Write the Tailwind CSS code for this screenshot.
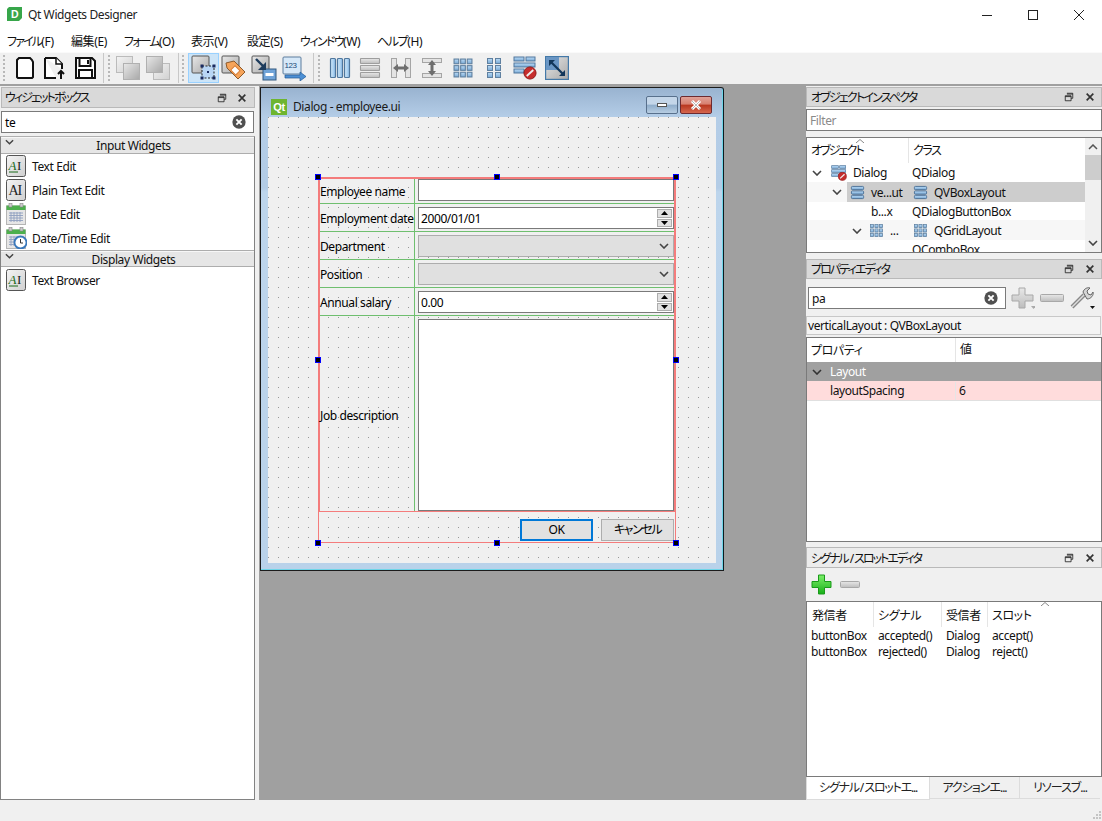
<!doctype html>
<html lang="ja">
<head>
<meta charset="utf-8">
<title>Qt Widgets Designer</title>
<script src="https://cdn.jsdelivr.net/npm/@tailwindcss/browser@4"></script>
</head>
<body class="m-0 overflow-hidden bg-[#f0f0f0]">
<svg class="absolute w-0 h-0">
  <defs>
    <linearGradient id="g" x1="0" y1="0" x2="1" y2="1"><stop offset="0" stop-color="#e8e8e8"/><stop offset="1" stop-color="#a8a8a8"/></linearGradient>
    <linearGradient id="gl" x1="0" y1="0" x2="1" y2="1"><stop offset="0" stop-color="#f4f4f4"/><stop offset="1" stop-color="#d0d0d0"/></linearGradient>
    <linearGradient id="b" x1="0" y1="0" x2="1" y2="0"><stop offset="0" stop-color="#d4ebfb"/><stop offset="1" stop-color="#8cbde8"/></linearGradient>
    <linearGradient id="bv" x1="0" y1="0" x2="0" y2="1"><stop offset="0" stop-color="#bcdcf6"/><stop offset="1" stop-color="#78a8d4"/></linearGradient>
    <linearGradient id="gv" x1="0" y1="0" x2="0" y2="1"><stop offset="0" stop-color="#e8e8e8"/><stop offset="1" stop-color="#bdbdbd"/></linearGradient>
    <linearGradient id="grn" x1="0" y1="0" x2="0" y2="1"><stop offset="0" stop-color="#7df06a"/><stop offset="1" stop-color="#18b018"/></linearGradient>
    <symbol id="fl" viewBox="0 0 12 12"><path d="M3.5 1.5h7v6h-2M1.5 4.5h7v6h-7zM1.5 5.5h7M3.5 2.5h7" fill="none" stroke="#222" stroke-width="1"/></symbol>
    <symbol id="xx" viewBox="0 0 12 12"><path d="M2 2l8 8M10 2l-8 8" stroke="#333" stroke-width="2"/></symbol>
    <symbol id="clr" viewBox="0 0 16 16"><circle cx="8" cy="8" r="7.6" fill="#505050"/><path d="M5 5l6 6M11 5l-6 6" stroke="#fff" stroke-width="2.2"/></symbol>
    <symbol id="chev" viewBox="0 0 10 6"><path d="M1 1l4 4 4-4" fill="none" stroke="#444" stroke-width="1.6"/></symbol>
    <symbol id="vbox" viewBox="0 0 16 16"><g fill="url(#bv)" stroke="#4a6f95"><rect x="1.5" y="1.5" width="13" height="3.5" rx="1"/><rect x="1.5" y="6.3" width="13" height="3.5" rx="1"/><rect x="1.5" y="11" width="13" height="3.5" rx="1"/></g></symbol>
    <symbol id="grid" viewBox="0 0 16 16"><g fill="url(#bv)" stroke="#5f80a0" stroke-width=".8"><rect x="1.5" y="1.5" width="3.4" height="3.4"/><rect x="6.3" y="1.5" width="3.4" height="3.4"/><rect x="11.1" y="1.5" width="3.4" height="3.4"/><rect x="1.5" y="6.3" width="3.4" height="3.4"/><rect x="6.3" y="6.3" width="3.4" height="3.4"/><rect x="11.1" y="6.3" width="3.4" height="3.4"/><rect x="1.5" y="11.1" width="3.4" height="3.4"/><rect x="6.3" y="11.1" width="3.4" height="3.4"/><rect x="11.1" y="11.1" width="3.4" height="3.4"/></g></symbol>
    <symbol id="ai" viewBox="0 0 20 22"><rect x=".5" y=".5" width="19" height="21" rx="2" fill="url(#gl)" stroke="#555"/></symbol>
    <symbol id="cal" viewBox="0 0 20 22"><rect x=".5" y="3" width="19" height="18.5" fill="#e6e6e6" stroke="#b5b5b5"/><rect x=".5" y="2.5" width="19" height="4.5" fill="#4cb04c"/><rect x="3" y="0.5" width="3" height="3.5" fill="#ccc" stroke="#888" stroke-width=".6"/><rect x="14" y="0.5" width="3" height="3.5" fill="#ccc" stroke="#888" stroke-width=".6"/><path d="M3 10h14M3 12.5h14M3 15h14M3 17.5h14M5 9v10M8 9v10M11 9v10M14 9v10" stroke="#8f9fc0" stroke-width=".9"/></symbol>
    <symbol id="nog" viewBox="0 0 12 12"><circle cx="6" cy="6" r="5.2" fill="#c62d2d" stroke="#8e1616" stroke-width=".8"/><path d="M3.2 8.6l5.6-5.2" stroke="#eee" stroke-width="1.6"/></symbol>
  </defs>
</svg>

<div class="flex flex-col w-[1102px] h-[821px] overflow-hidden text-[12px] leading-[16px] tracking-[-0.4px] [font-feature-settings:'palt'] text-black bg-[#f0f0f0] font-['Noto_Sans','Noto_Sans_CJK_JP',sans-serif]">

  <!-- title bar -->
  <div class="flex items-center h-[30px] bg-white shrink-0">
    <svg class="ml-[7px] mt-[-2px]" width="15" height="14" viewBox="0 0 15 14"><path d="M2 0h13v11l-3 3H0V2z" fill="#37a64a"/><text x="4" y="11" font-size="10.5" font-weight="700" fill="#fff" font-family="Liberation Sans">D</text></svg>
    <span class="ml-[6px] text-[12px] text-[#222]">Qt Widgets Designer</span>
    <div class="ml-auto flex items-center h-full">
      <div class="w-[46px] h-full flex items-center justify-center"><svg width="10" height="10"><path d="M0 5.5h10" stroke="#222"/></svg></div>
      <div class="w-[46px] h-full flex items-center justify-center"><svg width="10" height="10"><rect x=".5" y=".5" width="9" height="9" fill="none" stroke="#222"/></svg></div>
      <div class="w-[46px] h-full flex items-center justify-center"><svg width="10" height="10"><path d="M0 0l10 10M10 0L0 10" stroke="#222"/></svg></div>
    </div>
  </div>

  <!-- menu bar -->
  <div class="flex items-center h-[22px] pt-[2px] bg-white shrink-0 pl-[7px] text-[12px] text-[#111]">
    <span class="w-[64px]"><span class="tracking-[-1.8px]">ファイル</span>(F)</span><span class="w-[53px]">編集(E)</span><span class="w-[67px]"><span class="tracking-[-1.8px]">フォーム</span>(O)</span><span class="w-[56px]">表示(V)</span><span class="w-[53px]">設定(S)</span><span class="w-[77px]"><span class="tracking-[-1.6px]">ウィンドウ</span>(W)</span><span><span class="tracking-[-1.4px]">ヘルプ</span>(H)</span>
  </div>

  <!-- toolbar -->
  <div class="flex items-center h-[34px] shrink-0 bg-[#f0f0f0] border-b-2 border-[#a0a0a0] shadow-[inset_0_1px_0_#fafafa]">
    <div class="w-[2px] h-[26px] ml-[3px] border-l-2 border-dotted border-[#b8b8b8]"></div>
    <div class="w-[30px] h-[30px] ml-[5px] flex items-center justify-center"><svg width="24" height="24" viewBox="0 0 24 24"><path d="M6 2h11l2 2 1 2v15l-1 1H5l-1-1V4z" fill="#fff" stroke="#111" stroke-width="2"/></svg></div>
    <div class="w-[30px] h-[30px] flex items-center justify-center"><svg width="24" height="24" viewBox="0 0 24 24"><path d="M2 2h11l6 6v5M2 2v20h11" fill="#fff" stroke="#111" stroke-width="2"/><path d="M13 2v6h6" fill="#fff" stroke="#111" stroke-width="1.5"/><path d="M18 23v-7M15 18l3-3 3 3" fill="none" stroke="#111" stroke-width="2"/></svg></div>
    <div class="w-[30px] h-[30px] flex items-center justify-center"><svg width="24" height="24" viewBox="0 0 24 24"><path d="M3 2h16l3 3v17H3z" fill="#fff" stroke="#111" stroke-width="2"/><rect x="6.5" y="2" width="11" height="8" fill="#fff" stroke="#111" stroke-width="2"/><rect x="6" y="14" width="13" height="8" fill="#fff" stroke="#111" stroke-width="2"/><rect x="14" y="4" width="2" height="4" fill="#111"/></svg></div>
    <div class="w-[1px] h-[30px] ml-[3px] bg-[#c8c8c8]"></div>
    <div class="w-[2px] h-[26px] ml-[4px] border-l-2 border-dotted border-[#b8b8b8]"></div>
    <div class="w-[30px] h-[30px] ml-[3px] flex items-center justify-center"><svg width="26" height="26" viewBox="0 0 26 26"><rect x="1.5" y="1.5" width="16" height="16" fill="url(#gl)" stroke="#bbb"/><rect x="8.5" y="8.5" width="16" height="16" fill="url(#g)" stroke="#b0b0b0"/></svg></div>
    <div class="w-[30px] h-[30px] flex items-center justify-center"><svg width="26" height="26" viewBox="0 0 26 26"><rect x="8.5" y="8.5" width="16" height="16" fill="url(#gl)" stroke="#bbb"/><rect x="1.5" y="1.5" width="16" height="16" fill="url(#g)" stroke="#b0b0b0"/></svg></div>
    <div class="w-[1px] h-[30px] ml-[5px] bg-[#c8c8c8]"></div>
    <div class="w-[2px] h-[26px] ml-[3px] border-l-2 border-dotted border-[#b8b8b8]"></div>
    <div class="w-[31px] h-[30px] ml-[4px] flex items-center justify-center bg-[#cce4f7] border border-[#99d1ff]"><svg width="26" height="26" viewBox="0 0 26 26"><rect x="1" y="1" width="17" height="17" rx="1" fill="url(#g)" stroke="#555"/><rect x="11" y="11" width="12" height="12" fill="#b9d6f5" stroke="#222" stroke-dasharray="2 1.5"/><path d="M9.5 9.5h3v3h-3zM21.5 9.5h3v3h-3zM9.5 21.5h3v3h-3zM21.5 21.5h3v3h-3zM16 16h2v2h-2z" fill="#1a2a60"/></svg></div>
    <div class="w-[30px] h-[30px] flex items-center justify-center"><svg width="26" height="26" viewBox="0 0 26 26"><rect x="1" y="1" width="17" height="17" rx="1" fill="url(#g)" stroke="#555"/><path d="M5 8l8-2 11 11-7 7L6 13z" fill="#f6a45a" stroke="#8d5a2b"/><rect x="11" y="12" width="7" height="6" transform="rotate(45 14 15)" fill="#fff" stroke="#d9803a"/></svg></div>
    <div class="w-[30px] h-[30px] flex items-center justify-center"><svg width="26" height="26" viewBox="0 0 26 26"><rect x="1" y="1" width="17" height="17" rx="1" fill="url(#g)" stroke="#555"/><rect x="12" y="14" width="13" height="11" fill="#6fa3d8" stroke="#33597f"/><rect x="14.5" y="18" width="8" height="3" fill="#fff"/><path d="M5 4l9 9" stroke="#1d3b5c" stroke-width="2.4"/><path d="M15 7v8H7z" fill="#1d3b5c"/></svg></div>
    <div class="w-[31px] h-[30px] flex items-center justify-center"><svg width="26" height="26" viewBox="0 0 26 26"><rect x="1" y="2" width="18" height="17" rx="1" fill="#d6e8f8" stroke="#5d7c9d"/><text x="2.5" y="13" font-size="8" fill="#234a78" font-family="Liberation Sans">123</text><path d="M3 20h15v-3l6 4.5-6 4.5v-3H3z" fill="#4d90d5" stroke="#1f5a96" stroke-width=".7"/></svg></div>
    <div class="w-[1px] h-[30px] ml-[3px] bg-[#c8c8c8]"></div>
    <div class="w-[2px] h-[26px] ml-[4px] border-l-2 border-dotted border-[#b8b8b8]"></div>
    <div class="w-[30px] h-[30px] ml-[5px] flex items-center justify-center"><svg width="22" height="22" viewBox="0 0 22 22"><g fill="url(#b)" stroke="#50779d" stroke-width="1.2"><rect x="1.5" y="1.5" width="5" height="19" rx="1"/><rect x="8.5" y="1.5" width="5" height="19" rx="1"/><rect x="15.5" y="1.5" width="5" height="19" rx="1"/></g></svg></div>
    <div class="w-[30px] h-[30px] flex items-center justify-center"><svg width="22" height="22" viewBox="0 0 22 22"><g fill="url(#gv)" stroke="#9e9e9e" stroke-width="1.1"><rect x="1.5" y="1.5" width="19" height="5" rx=".5"/><rect x="1.5" y="8.5" width="19" height="5" rx=".5"/><rect x="1.5" y="15.5" width="19" height="5" rx=".5"/></g></svg></div>
    <div class="w-[31px] h-[30px] flex items-center justify-center"><svg width="22" height="22" viewBox="0 0 22 22"><g fill="#e4e4e4" stroke="#a5a5a5"><rect x="1.5" y="1.5" width="5" height="19"/><rect x="15.5" y="1.5" width="5" height="19"/></g><path d="M3 11l5-4v2.500h6V7l5 4-5 4v-2.500H8V15z" fill="#6e6e6e"/></svg></div>
    <div class="w-[31px] h-[30px] flex items-center justify-center"><svg width="22" height="22" viewBox="0 0 22 22"><g fill="#e4e4e4" stroke="#a5a5a5"><rect x="1.5" y="1.500" width="19" height="4"/><rect x="1.5" y="16.500" width="19" height="4"/></g><path d="M11 3l4 5h-2.500v6H15l-4 5-4-5h2.500V8H7z" fill="#6e6e6e"/></svg></div>
    <div class="w-[31px] h-[30px] flex items-center justify-center"><svg width="22" height="22" viewBox="0 0 16 16"><use href="#grid"/></svg></div>
    <div class="w-[31px] h-[30px] flex items-center justify-center"><svg width="16" height="22" viewBox="0 0 16 22"><g fill="url(#bv)" stroke="#5f80a0"><rect x="1.500" y="1.500" width="5" height="5"/><rect x="9.500" y="1.500" width="5" height="5"/><rect x="1.500" y="8.500" width="5" height="5"/><rect x="9.500" y="8.500" width="5" height="5"/><rect x="1.500" y="15.500" width="5" height="5"/><rect x="9.500" y="15.500" width="5" height="5"/></g></svg></div>
    <div class="w-[32px] h-[30px] flex items-center justify-center"><svg width="24" height="24" viewBox="0 0 24 24"><g fill="url(#bv)" stroke="#50779d"><rect x="1" y="1" width="10" height="4"/><rect x="13" y="1" width="9" height="4"/><rect x="1" y="7" width="21" height="4"/><rect x="1" y="13" width="10" height="4"/></g><use href="#nog" x="10" y="10" width="14" height="14"/></svg></div>
    <div class="w-[31px] h-[30px] flex items-center justify-center"><svg width="24" height="24" viewBox="0 0 24 24"><rect x=".5" y=".5" width="23" height="23" fill="url(#g)" stroke="#4479a8" stroke-width="1.400"/><rect x="1" y="1" width="13" height="13" fill="#6a96c4"/><path d="M5 5l14 14" stroke="#12365a" stroke-width="2.200"/><path d="M4 10V4h6zM20 14v6h-6z" fill="#12365a"/></svg></div>
  </div>

  <!-- main area -->
  <div class="flex flex-1 min-h-0">
    <!-- left dock -->
    <div class="flex flex-col w-[255px] shrink-0">
      <div class="flex items-center h-[21px] ml-[1px] mt-[1px] bg-[#d9d9d9] border border-[#b9b9b9] pl-[3px] text-[#111]">
        <span class="pt-[1px] tracking-[-1.9px]">ウィジェットボックス</span>
        <svg class="ml-auto mr-[10px]" width="10" height="10"><use href="#fl"/></svg>
        <svg class="mr-[7px]" width="10" height="10"><use href="#xx"/></svg>
      </div>
      <div class="flex items-center h-[22px] ml-[1px] mr-[1px] mt-[3px] bg-white border border-[#7a7a7a] pl-[3px] pr-[7px]">
        <span class="pt-[2px]">te</span><svg class="ml-auto" width="14" height="14"><use href="#clr"/></svg>
      </div>
      <div class="flex flex-col flex-1 mt-[3px] bg-white border border-[#828282] border-t-[#b0b0b0] text-[#111]">
        <div class="relative flex items-center justify-center h-[17px] pt-[2px] pl-[12px] bg-[#e6e6e6] border-b border-[#adadad] shadow-[inset_0_1px_0_#f7f7f7]">
          <svg class="absolute left-[4px] top-[2px]" width="9" height="6"><use href="#chev"/></svg>
          <span>Input Widgets</span>
        </div>
        <div class="flex items-center h-[24px] pl-[5px] gap-[6px]"><svg width="20" height="22" viewBox="0 0 20 22"><use href="#ai"/><text x="2.500" y="15" font-size="13" font-style="italic" fill="#1b6b1b" font-family="Liberation Serif">A</text><text x="11" y="15" font-size="13" fill="#222" font-family="Liberation Serif">I</text><path d="M3 17h9" stroke="#1b6b1b"/></svg><span class="pt-[2px]">Text Edit</span></div>
        <div class="flex items-center h-[24px] pl-[5px] gap-[6px]"><svg width="20" height="22" viewBox="0 0 20 22"><use href="#ai"/><text x="2.500" y="16" font-size="14" fill="#222" font-family="Liberation Serif">A</text><text x="11.500" y="16" font-size="14" fill="#222" font-family="Liberation Serif">I</text></svg><span class="pt-[2px]">Plain Text Edit</span></div>
        <div class="flex items-center h-[24px] pl-[5px] gap-[6px]"><svg width="20" height="22" viewBox="0 0 20 22"><use href="#cal"/></svg><span class="pt-[2px]">Date Edit</span></div>
        <div class="flex items-center h-[24px] pl-[5px] gap-[6px]"><svg width="21" height="22" viewBox="0 0 21 22"><use href="#cal" width="20" height="22"/><circle cx="14.500" cy="15.500" r="6" fill="#fff" stroke="#3a78bb" stroke-width="1.800"/><path d="M14.500 12v4h2.500" fill="none" stroke="#333"/></svg><span class="-ml-[1px] pt-[2px]">Date/Time Edit</span></div>
        <div class="relative flex items-center justify-center h-[17px] pt-[2px] pl-[12px] bg-[#e6e6e6] border-y border-[#adadad] shadow-[inset_0_1px_0_#f7f7f7]">
          <svg class="absolute left-[4px] top-[2px]" width="9" height="6"><use href="#chev"/></svg>
          <span>Display Widgets</span>
        </div>
        <div class="flex items-center h-[26px] pl-[5px] gap-[6px]"><svg width="20" height="22" viewBox="0 0 20 22"><use href="#ai"/><text x="2.500" y="15" font-size="13" font-style="italic" fill="#1b6b1b" font-family="Liberation Serif">A</text><text x="11" y="15" font-size="13" fill="#222" font-family="Liberation Serif">I</text><path d="M3 17h9" stroke="#1b6b1b"/></svg><span class="pt-[2px]">Text Browser</span></div>
      </div>
    </div>

    <!-- MDI area -->
    <div class="relative w-[547px] ml-[4px] shrink-0 bg-[#a0a0a0]">
      <!-- dialog window -->
      <div class="absolute left-[1px] top-[1px] w-[464px] h-[484px] flex flex-col rounded-tr-[3px] border border-[#1c1c1c] border-r-[#0c1c22] shadow-[inset_-1px_-1px_0_#6fd5e8] bg-[linear-gradient(to_bottom,#99b3d0_0,#b4cde7_29px,#b3cce6_100px,#bdd5ec_104px,#b9d2ea_100%)]">
        <div class="flex items-center h-[29px] shrink-0 pl-[10px] pt-[8px]">
          <div class="flex items-center justify-center w-[16px] h-[16px] bg-[#6eb52f] text-white text-[11px] font-bold font-['Liberation_Sans']">Qt</div>
          <span class="ml-[6px] text-[#1a1a1a]">Dialog - employee.ui</span>
          <div class="ml-auto flex mr-[11px] mt-[-3px] gap-[2px]">
            <div class="w-[32px] h-[18px] flex items-center justify-center rounded-[2px] border border-[#58708c] bg-[linear-gradient(to_bottom,#c4d6e9_0,#c4d6e9_45%,#8fadcb_50%,#b7cde2_100%)]"><div class="w-[10px] h-[4px] bg-white border border-[#555]"></div></div>
            <div class="w-[32px] h-[18px] flex items-center justify-center rounded-[2px] border border-[#6d2a30] bg-[linear-gradient(to_bottom,#e0a198_0,#d87f6f_45%,#b8361f_50%,#d5674f_100%)]"><svg width="12" height="10"><path d="M2 1l8 8M10 1L2 9" stroke="#fff" stroke-width="3"/><path d="M2 1l8 8M10 1L2 9" stroke="#8a8a8a" stroke-width=".6"/></svg></div>
          </div>
        </div>
        <!-- form -->
        <div class="relative ml-[7px] w-[448px] h-[446px] pl-[50px] pt-[60px] bg-[#f0f0f0] bg-[radial-gradient(circle_at_0.5px_0.5px,#999_0.55px,transparent_0.9px)] bg-[size:10px_10px]">
          <div class="relative w-[358px] h-[366px] border border-[#f47c7c]">
            <div class="w-[356px] h-[334px] border border-[#f47c7c] border-b-[#f47c7c] flex flex-col">
              <div class="flex h-[25px] border-b border-[#6fbf6f]">
                <div class="w-[95px] h-full pt-[2px] border-r border-[#6fbf6f] flex items-center whitespace-nowrap">Employee name</div>
                <div class="pl-[3px]"><div class="w-[256px] h-[22px] bg-white border border-[#7a7a7a]"></div></div>
              </div>
              <div class="flex h-[28px] border-b border-[#6fbf6f]">
                <div class="w-[95px] h-full pt-[2px] border-r border-[#6fbf6f] flex items-center whitespace-nowrap">Employment date</div>
                <div class="pl-[3px] pt-[3px]"><div class="relative flex items-center pl-[2px] pt-[1px] w-[256px] h-[22px] bg-white border border-[#7a7a7a]">2000/01/01
                  <div class="absolute right-[1px] top-[1px] w-[15px] h-[18px] flex flex-col gap-[1px] items-center"><div class="w-[15px] h-[9px] bg-[#e1e1e1] border border-[#adadad] flex items-center justify-center"><svg width="7" height="4"><path d="M3.500 0L7 4H0z"/></svg></div><div class="w-[15px] h-[9px] bg-[#e1e1e1] border border-[#adadad] flex items-center justify-center"><svg width="7" height="4"><path d="M3.500 4L7 0H0z"/></svg></div></div>
                </div></div>
              </div>
              <div class="flex h-[28px] border-b border-[#6fbf6f]">
                <div class="w-[95px] h-full pt-[2px] border-r border-[#6fbf6f] flex items-center whitespace-nowrap">Department</div>
                <div class="pl-[3px] pt-[3px]"><div class="flex items-center justify-end pr-[4px] w-[256px] h-[22px] bg-[#e0e0e0] border border-[#adadad]"><svg width="10" height="6"><use href="#chev" width="10" height="6"/></svg></div></div>
              </div>
              <div class="flex h-[28px] border-b border-[#6fbf6f]">
                <div class="w-[95px] h-full pt-[2px] border-r border-[#6fbf6f] flex items-center whitespace-nowrap">Position</div>
                <div class="pl-[3px] pt-[3px]"><div class="flex items-center justify-end pr-[4px] w-[256px] h-[22px] bg-[#e0e0e0] border border-[#adadad]"><svg width="10" height="6"><use href="#chev" width="10" height="6"/></svg></div></div>
              </div>
              <div class="flex h-[28px] border-b border-[#6fbf6f]">
                <div class="w-[95px] h-full pt-[2px] border-r border-[#6fbf6f] flex items-center whitespace-nowrap">Annual salary</div>
                <div class="pl-[3px] pt-[3px]"><div class="relative flex items-center pl-[2px] pt-[1px] w-[256px] h-[22px] bg-white border border-[#7a7a7a]">0.00
                  <div class="absolute right-[1px] top-[1px] w-[15px] h-[18px] flex flex-col gap-[1px] items-center"><div class="w-[15px] h-[9px] bg-[#e1e1e1] border border-[#adadad] flex items-center justify-center"><svg width="7" height="4"><path d="M3.500 0L7 4H0z"/></svg></div><div class="w-[15px] h-[9px] bg-[#e1e1e1] border border-[#adadad] flex items-center justify-center"><svg width="7" height="4"><path d="M3.500 4L7 0H0z"/></svg></div></div>
                </div></div>
              </div>
              <div class="flex flex-1">
                <div class="w-[95px] h-full pt-[4px] border-r border-[#6fbf6f] flex items-center whitespace-nowrap">Job description</div>
                <div class="pl-[3px] pt-[3px]"><div class="w-[256px] h-[192px] bg-white border border-[#7a7a7a]"></div></div>
              </div>
            </div>
            <div class="flex justify-end pt-[7px] pr-[1px] gap-[8px]">
              <div class="flex items-center justify-center w-[73px] h-[22px] bg-[#e1e1e1] border-2 border-[#0078d7]">OK</div>
              <div class="flex items-center justify-center w-[73px] h-[22px] bg-[#e1e1e1] border border-[#adadad] tracking-[-1.4px]">キャンセル</div>
            </div>
            <!-- handles -->
            <div class="absolute left-[-4px] top-[-4px] w-[6px] h-[6px] bg-black border border-[#0000ff]"></div>
            <div class="absolute left-[175px] top-[-4px] w-[6px] h-[6px] bg-black border border-[#0000ff]"></div>
            <div class="absolute left-[354px] top-[-4px] w-[6px] h-[6px] bg-black border border-[#0000ff]"></div>
            <div class="absolute left-[-4px] top-[179px] w-[6px] h-[6px] bg-black border border-[#0000ff]"></div>
            <div class="absolute left-[354px] top-[179px] w-[6px] h-[6px] bg-black border border-[#0000ff]"></div>
            <div class="absolute left-[-4px] top-[362px] w-[6px] h-[6px] bg-black border border-[#0000ff]"></div>
            <div class="absolute left-[175px] top-[362px] w-[6px] h-[6px] bg-black border border-[#0000ff]"></div>
            <div class="absolute left-[354px] top-[362px] w-[6px] h-[6px] bg-black border border-[#0000ff]"></div>
          </div>
        </div>
      </div>
    </div>

    <!-- right dock -->
    <div class="flex flex-col flex-1 min-w-0 text-[#111]">
      <!-- Object inspector -->
      <div class="flex items-center h-[20px] mt-[1px] bg-[#d9d9d9] border border-[#b9b9b9] pl-[4px] shrink-0">
        <span class="pt-[2px] tracking-[-1.8px]">オブジェクトインスペクタ</span>
        <svg class="ml-auto mr-[11px]" width="10" height="10"><use href="#fl"/></svg>
        <svg class="mr-[6px]" width="10" height="10"><use href="#xx"/></svg>
      </div>
      <div class="flex items-center h-[22px] mt-[2px] bg-white border border-[#7a7a7a] pl-[3px] pt-[2px] text-[#8a8a8a] shrink-0">Filter</div>
      <div class="flex h-[116px] mt-[6px] bg-white border border-[#7a7a7a] overflow-hidden shrink-0">
        <div class="flex-1 min-w-0 overflow-hidden">
          <div class="relative flex h-[25px] items-center">
            <div class="w-[102px] h-full pl-[4px] pt-[5px] border-r border-[#e5e5e5] tracking-[-1.900px]">オブジェクト</div>
            <div class="pl-[4px] pt-[5px] h-full tracking-[-1.400px]">クラス</div>
            <svg class="absolute left-[49px] top-[1px]" width="8" height="4"><path d="M0 4l4-3.500L8 4" fill="none" stroke="#888"/></svg>
          </div>
          <div class="flex items-center h-[19px] pt-[1px]"><svg class="ml-[5px]" width="10" height="6"><use href="#chev" width="10" height="6"/></svg><svg class="ml-[9px]" width="16" height="16" viewBox="0 0 24 24"><g fill="url(#bv)" stroke="#50779d"><rect x="1" y="1" width="10" height="4"/><rect x="13" y="1" width="9" height="4"/><rect x="1" y="7" width="21" height="4"/><rect x="1" y="13" width="10" height="4"/></g><use href="#nog" x="10" y="10" width="14" height="14"/></svg><span class="ml-[6px] w-[60px]">Dialog</span><span class="ml-[-1px]">QDialog</span></div>
          <div class="flex items-center h-[20px] bg-[#f7f7f7]"><svg class="ml-[25px]" width="10" height="6"><use href="#chev" width="10" height="6"/></svg><div class="flex items-center flex-1 h-full pt-[1px] ml-[5px] bg-[#cdcdcd]"><svg class="ml-[3px]" width="15" height="15"><use href="#vbox"/></svg><span class="ml-[6px] w-[38px]">ve...ut</span><svg class="ml-[4px]" width="15" height="15"><use href="#vbox"/></svg><span class="ml-[6px]">QVBoxLayout</span></div></div>
          <div class="flex items-center h-[18px] pt-[1px]"><span class="ml-[64px] w-[41px]">b...x</span><span>QDialogButtonBox</span></div>
          <div class="flex items-center h-[20px] pt-[1px] bg-[#f7f7f7]"><svg class="ml-[45px]" width="10" height="6"><use href="#chev" width="10" height="6"/></svg><svg class="ml-[7px]" width="15" height="15"><use href="#grid"/></svg><span class="ml-[6px] w-[23px]">...</span><svg width="15" height="15"><use href="#grid"/></svg><span class="ml-[6px]">QGridLayout</span></div>
          <div class="flex items-start h-[16px] pl-[105px] pt-[2px] whitespace-nowrap">QComboBox</div>
        </div>
        <div class="relative w-[16px] shrink-0 bg-[#f0f0f0]">
          <svg class="absolute left-[3px] top-[6px]" width="10" height="6"><path d="M1 5l4-4 4 4" fill="none" stroke="#555" stroke-width="1.500"/></svg>
          <div class="absolute left-0 top-[17px] w-[16px] h-[25px] bg-[#cdcdcd]"></div>
          <svg class="absolute left-[3px] bottom-[6px]" width="10" height="6"><use href="#chev" width="10" height="6"/></svg>
        </div>
      </div>

      <!-- Property editor -->
      <div class="flex items-center h-[20px] mt-[6px] bg-[#d9d9d9] border border-[#b9b9b9] pl-[4px] shrink-0">
        <span class="pt-[2px] tracking-[-1.900px]">プロパティエディタ</span>
        <svg class="ml-auto mr-[11px]" width="10" height="10"><use href="#fl"/></svg>
        <svg class="mr-[6px]" width="10" height="10"><use href="#xx"/></svg>
      </div>
      <div class="flex items-center h-[22px] mt-[8px] shrink-0">
        <div class="flex items-center w-[198px] h-[22px] ml-[2px] bg-white border border-[#7a7a7a] pl-[3px] pr-[7px]"><span class="pt-[2px]">pa</span><svg class="ml-auto" width="14" height="14"><use href="#clr"/></svg></div>
        <svg class="ml-[5px]" width="24" height="22" viewBox="0 0 24 22"><path d="M8 1h6v7h8v6h-8v7H8v-7H1V8h7z" fill="url(#gv)" stroke="#a8a8a8"/><path d="M20 19h5l-2.500 3z" fill="#aaa"/></svg>
        <svg class="ml-[5px]" width="24" height="8" viewBox="0 0 24 8"><rect x=".5" y=".5" width="23" height="7" rx="1" fill="url(#gv)" stroke="#a8a8a8"/></svg>
        <svg class="ml-[6px]" width="26" height="24" viewBox="0 0 26 24"><path d="M2 21L14 9" stroke="#888" stroke-width="4"/><path d="M2 21L14 9" stroke="#ddd" stroke-width="1.500"/><path d="M13 6c1-3 4-5 7-4l-3 3 1 3 3 1 2-3c1 3-2 7-6 7z" fill="#d5d5d5" stroke="#666"/><path d="M20 20h5l-2.500 3z" fill="#111"/></svg>
      </div>
      <div class="flex items-center h-[19px] mt-[7px] mr-[1px] bg-[#f4f4f4] border border-[#c8c8c8] pl-[1px] shrink-0 whitespace-nowrap">verticalLayout : QVBoxLayout</div>
      <div class="flex flex-col h-[205px] mt-[2px] bg-white border border-[#7a7a7a] shrink-0">
        <div class="flex h-[24px] items-center"><div class="w-[149px] h-full pl-[4px] pt-[5px] border-r border-[#e5e5e5]">プロパティ</div><div class="pl-[4px] pt-[4px] h-full">値</div></div>
        <div class="flex items-center h-[19px] bg-[#a0a0a0] text-white"><svg class="ml-[5px]" width="10" height="6"><path d="M1 1l4 4 4-4" fill="none" stroke="#333" stroke-width="1.600"/></svg><span class="ml-[8px]">Layout</span></div>
        <div class="flex items-center h-[20px] pt-[1px] bg-[#ffdcdc] border-b border-[#e0e0e0]"><div class="w-[149px] h-full pl-[23px] flex items-center border-r border-[#e5e5e5]">layoutSpacing</div><div class="pl-[3px]">6</div></div>
      </div>

      <!-- Signal / slot editor -->
      <div class="flex items-center h-[21px] mt-[5px] bg-[#ececec] border border-[#b9b9b9] pl-[4px] shrink-0">
        <span class="pt-[2px] tracking-[-2px]">シグナル<span class="tracking-[0px] pl-[2px]">/</span>スロットエディタ</span>
        <svg class="ml-auto mr-[11px]" width="10" height="10"><use href="#fl"/></svg>
        <svg class="mr-[6px]" width="10" height="10"><use href="#xx"/></svg>
      </div>
      <div class="flex items-center h-[33px] shrink-0 pl-[5px]">
        <svg width="21" height="21" viewBox="0 0 21 21"><path d="M7.500 1h6v6.500H20v6h-6.500V20h-6v-6.500H1v-6h6.500z" fill="url(#grn)" stroke="#1a9a1a"/></svg>
        <svg class="ml-[8px]" width="20" height="7" viewBox="0 0 20 7"><rect x=".5" y=".5" width="19" height="6" rx="1" fill="url(#gv)" stroke="#a8a8a8"/></svg>
      </div>
      <div class="relative flex flex-col h-[176px] bg-white border border-[#7a7a7a] shrink-0">
        <div class="flex h-[25px] items-center">
          <div class="w-[67px] h-full pl-[5px] pt-[6px] border-r border-[#e5e5e5]">発信者</div>
          <div class="w-[68px] h-full pl-[4px] pt-[6px] border-r border-[#e5e5e5]">シグナル</div>
          <div class="w-[46px] h-full pl-[4px] pt-[6px] border-r border-[#e5e5e5]">受信者</div>
          <div class="pl-[4px] pt-[6px] h-full">スロット</div>
        </div>
        <svg class="absolute left-[234px] top-[0px]" width="8" height="4"><path d="M0 4l4-3.500L8 4" fill="none" stroke="#888"/></svg>
        <div class="flex items-center h-[16px] mt-[1px]"><span class="w-[67px] pl-[4px]">buttonBox</span><span class="w-[68px] pl-[4px]">accepted()</span><span class="w-[46px] pl-[4px]">Dialog</span><span class="pl-[4px]">accept()</span></div>
        <div class="flex items-center h-[16px]"><span class="w-[67px] pl-[4px]">buttonBox</span><span class="w-[68px] pl-[4px]">rejected()</span><span class="w-[46px] pl-[4px]">Dialog</span><span class="pl-[4px]">reject()</span></div>
      </div>
      <div class="flex h-[23px] shrink-0 text-[#222]">
        <div class="flex items-center justify-center w-[124px] h-full bg-white border border-t-0 border-[#dcdcdc] tracking-[-1.2px]">シグナル<span class="tracking-[0px] pl-[1px]">/</span>スロットエ...</div>
        <div class="flex items-center justify-center w-[90px] h-[22px] bg-[#f0f0f0] border-b border-r border-[#dcdcdc] tracking-[-1px]">アクションエ...</div>
        <div class="flex items-center justify-center w-[80px] h-[22px] bg-[#f0f0f0] border-b border-[#dcdcdc] tracking-[-1px]">リソースブ...</div>
      </div>
    </div>
  </div>

  <!-- status bar -->
  <div class="relative h-[21px] shrink-0 bg-[#f0f0f0]">
    <svg class="absolute right-[1px] bottom-[2px]" width="9" height="9"><path d="M7 1h2v2H7zM4 4h2v2H4zM7 4h2v2H7zM1 7h2v2H1zM4 7h2v2H4zM7 7h2v2H7z" fill="#c4c4c4"/></svg>
  </div>
</div>
</body>
</html>
